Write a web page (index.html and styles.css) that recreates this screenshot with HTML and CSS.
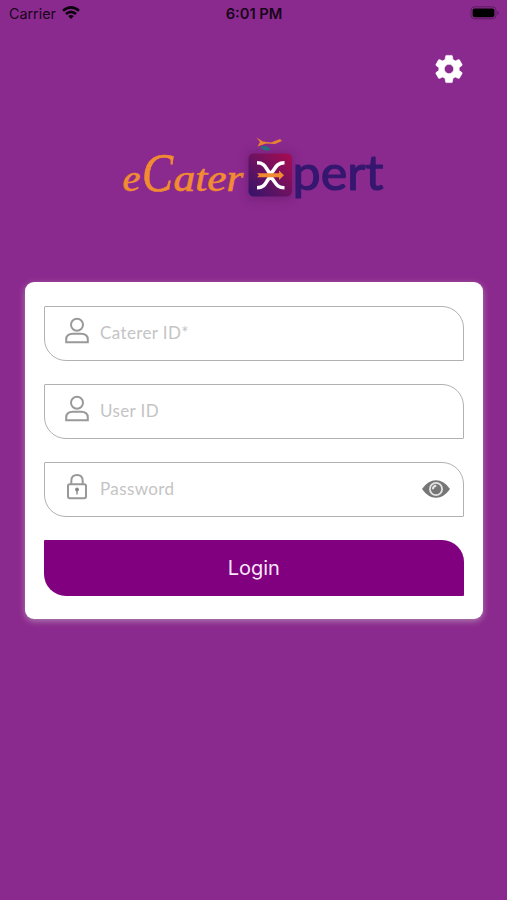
FILE: index.html
```html
<!DOCTYPE html>
<html lang="en">
<head>
<meta charset="utf-8">
<title>eCaterXpert</title>
<link rel="stylesheet" href="styles.css">
</head>
<body>
<header class="status">
  <div class="carrier"><span>Carrier</span>
    <svg width="18" height="14" viewBox="0 0 18 14" fill="none" stroke="#0b020d" stroke-width="2.6"><path d="M1 4.8Q9-2 17 4.8M3.9 8Q9 3.6 14.1 8"/><path d="M6.2 10.1Q9 7.8 11.8 10.1L9 13Z" fill="#0b020d" stroke="none"/></svg>
  </div>
  <time class="clock">6:01 PM</time>
  <svg class="battery" width="29" height="14" viewBox="0 0 29 14"><rect x="1" y=".8" width="25" height="12" rx="3.5" fill="none" stroke="#5b1c60"/><rect x="2.6" y="2.4" width="21.8" height="8.8" rx="2" fill="#000"/><path d="M27.3 5v4q1.5-.7 1.5-2t-1.5-2" fill="#5b1c60"/></svg>
</header>
<div class="toolbar">
  <button class="settings" aria-label="Settings">
    <svg width="34" height="34" viewBox="0 0 24 24" fill="#fff" stroke="#fff" stroke-width=".4"><path d="M19.14 12.94c.04-.3.06-.61.06-.94 0-.32-.02-.64-.07-.94l2.03-1.58c.18-.14.23-.41.12-.61l-1.92-3.32c-.12-.22-.37-.29-.59-.22l-2.39.96c-.5-.38-1.03-.7-1.62-.94l-.36-2.54c-.04-.24-.24-.41-.48-.41h-3.84c-.24 0-.43.17-.47.41l-.36 2.54c-.59.24-1.13.57-1.62.94l-2.39-.96c-.22-.08-.47 0-.59.22L2.74 8.87c-.12.21-.08.47.12.61l2.03 1.58c-.05.3-.09.63-.09.94s.02.64.07.94l-2.03 1.58c-.18.14-.23.41-.12.61l1.92 3.32c.12.22.37.29.59.22l2.39-.96c.5.38 1.03.7 1.62.94l.36 2.54c.05.24.24.41.48.41h3.84c.24 0 .44-.17.47-.41l.36-2.54c.59-.24 1.13-.56 1.62-.94l2.39.96c.22.08.47 0 .59-.22l1.92-3.32c.12-.22.07-.47-.12-.61l-2.01-1.58zM12 15.3a3.3 3.3 0 1 1 0-6.6 3.3 3.3 0 0 1 0 6.6z"/></svg>
  </button>
</div>
<div class="brand">
  <svg width="280" height="90" viewBox="113 125 280 90">
    <defs>
      <linearGradient id="tile" x1="1" y1="0" x2="0" y2="1"><stop offset="0" stop-color="#aa0a50"/><stop offset=".5" stop-color="#6d1260"/><stop offset="1" stop-color="#32146a"/></linearGradient>
      <filter id="glow" x="-50%" y="-50%" width="200%" height="200%"><feGaussianBlur stdDeviation="4"/></filter>
    </defs>
    <g class="script">
      <text x="122.5" y="191" font-size="37" textLength="18" lengthAdjust="spacingAndGlyphs">e</text>
      <text x="142" y="191" font-size="55" textLength="31" lengthAdjust="spacingAndGlyphs">C</text>
      <text x="173.500" y="191" font-size="37" textLength="70" lengthAdjust="spacingAndGlyphs">ater</text>
    </g>
    <rect x="245" y="150" width="50" height="52" rx="8" fill="#5d176b" opacity=".35" filter="url(#glow)"/>
    <rect x="248.500" y="153.500" width="43.500" height="43" rx="5" fill="url(#tile)"/>
    <path d="M257 162.800C265 162.800 265.500 168 268.500 171.500Q271.500 175.200 268.500 179C265.500 182.500 265 187.800 257 187.800M284.500 162.800C276.500 162.800 275.500 168 272.500 171.500Q269.500 175.200 272.500 179C275.500 182.500 276.500 187.800 284.500 187.800" fill="none" stroke="#fff" stroke-width="3.6"/>
    <path d="M257 173.200H279V170.500L284 175.200 279 180V177.200H257L259 175.200Z" fill="#f28a32"/>
    <path d="M256.500 137.500L263 141.500 271 142.500 280 139 282 141 275 144 266 143.500 257.500 146.500 260 142Z" fill="#e88334"/>
    <path d="M260 147Q268 144 270.500 150 264 152 260 147" fill="#25727c"/>
    <text class="plain" x="292.500" y="190" font-size="48" textLength="91" lengthAdjust="spacingAndGlyphs">pert</text>
  </svg>
</div>
<main class="card">
  <label class="field">
    <svg class="icon" width="26" height="28" viewBox="0 0 26 28"><circle cx="13" cy="7.700" r="6"/><path d="M2.200 25.300V22.500Q2.200 16.800 9 16.800H17Q23.800 16.800 23.800 22.500V25.300Z"/></svg>
    <input type="text" placeholder="Caterer ID*">
  </label>
  <label class="field">
    <svg class="icon" width="26" height="28" viewBox="0 0 26 28"><circle cx="13" cy="7.700" r="6"/><path d="M2.200 25.300V22.500Q2.200 16.800 9 16.800H17Q23.800 16.800 23.800 22.500V25.300Z"/></svg>
    <input type="text" placeholder="User ID">
  </label>
  <label class="field">
    <svg class="icon" width="26" height="28" viewBox="0 0 26 28"><rect x="4" y="11.300" width="18" height="14" rx="1.800"/><path d="M7.300 11V8Q7.300 2 13 2T18.700 8V11"/><path d="M13 17V21.500" stroke-width="1.600"/><circle cx="13" cy="16.500" r="1.900" fill="#858585" stroke="none"/></svg>
    <input type="password" placeholder="Password">
    <svg class="eye" width="28" height="18" viewBox="0 0 28 18"><path d="M0 9Q6 .3 14 .3T28 9Q22 17.700 14 17.700T0 9Z" fill="#767676"/><circle cx="14" cy="9" r="7" fill="#e4e4e4"/><circle cx="14" cy="9" r="5.200" fill="#767676"/><path d="M10.800 9.200Q11 6 14.300 5.800" fill="none" stroke="#e4e4e4" stroke-width="2"/></svg>
  </label>
  <button class="login">Login</button>
</main>
</body>
</html>
```
FILE: styles.css
```css
* { box-sizing: border-box; }
body {
  margin: 0;
  min-height: 900px;
  background: #8b2a8e;
  font-family: Lato, sans-serif;
}
.status {
  display: grid;
  grid-template-columns: 1fr auto 1fr;
  align-items: center;
  height: 28px;
  padding: 0 8px 0 9px;
  color: #17051a;
  font: 14px/28px Inter, sans-serif;
}
.carrier { display: flex; align-items: center; gap: 6px; }
.carrier span { font-size: 14.3px; }
.carrier svg { margin-bottom: 2px; }
.clock { font-weight: 600; font-size: 14.7px; }
.battery { justify-self: end; margin-bottom: 2px; }
.toolbar { display: flex; justify-content: flex-end; padding: 24px 41px 0 0; }
.settings { display: block; width: 34px; height: 34px; padding: 0; border: 0; background: none; }
.settings svg { display: block; }
.brand { display: flex; padding: 39px 0 0 113px; }
.script {
  font-family: "Liberation Serif", serif;
  font-style: italic;
  fill: #f28c32;
  stroke: #f28c32;
  stroke-width: .6;
}
.plain {
  font-family: Lato, sans-serif;
  font-weight: 400;
  fill: #35176f;
  stroke: #35176f;
  stroke-width: 1.2;
  stroke-linejoin: round;
}
.card {
  display: grid;
  gap: 23.2px;
  margin: 66.5px 24.5px 0 25px;
  padding: 24px 19px 23px;
  background: #fff;
  border-radius: 9px;
  box-shadow: 0 2px 6px rgba(190, 165, 190, .7);
}
.field {
  display: flex;
  align-items: center;
  height: 55px;
  padding: 0 13px 5px 19px;
  border: 1.4px solid #b1b1b1;
  border-radius: 1px 22px 1px 22px;
}
.icon { flex: none; fill: none; stroke: #999; stroke-width: 2; }
input {
  flex: 1;
  min-width: 0;
  margin: 4px 0 0 10px;
  padding: 0;
  border: 0;
  outline: 0;
  background: none;
  font: 17px/22px Lato, sans-serif;
  letter-spacing: .38px;
}
input::placeholder { color: #c4c4c4; opacity: 1; }
.eye { flex: none; margin-top: 4px; }
.login {
  height: 56px;
  padding: 0;
  border: 0;
  border-radius: 1px 22px 1px 22px;
  background: #800080;
  color: #fae6fa;
  font: 20px/57px Inter, sans-serif;
}
```
